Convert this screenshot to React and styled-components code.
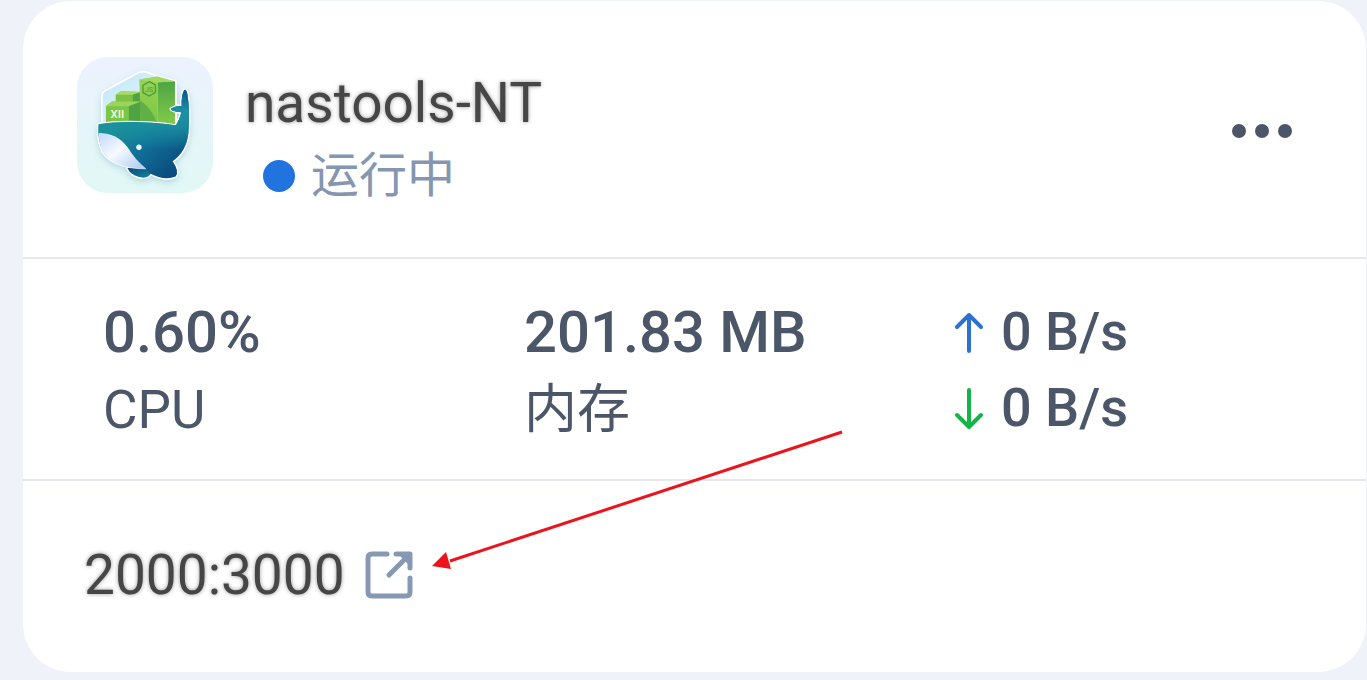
import React from "react";
import styled, { createGlobalStyle } from "styled-components";

const GlobalStyle = createGlobalStyle`
  *, *::before, *::after { box-sizing: border-box; }
  body {
    margin: 0;
    background: #eff3f9;
    font-family: Roboto, "Noto Sans CJK SC", sans-serif;
    color: #4b5668;
  }
`;

const Page = styled.main`
  padding: 1px 1px 8px 23px;
`;

const Card = styled.article`
  position: relative;
  background: #fff;
  border-radius: 48px;
`;

const Header = styled.header`
  display: flex;
  align-items: flex-start;
  height: 256px;
  padding: 56px 64px 0 54px;
`;

const AppLogo = styled.svg`
  flex: none;
  width: 136px;
  height: 136px;
  margin-right: 32px;
`;

const Heading = styled.div`
  flex: 1;
  padding-top: 12px;
`;

const Title = styled.h1`
  margin: 0;
  font-size: 55px;
  line-height: 68px;
  font-weight: 400;
  color: #464646;
  text-shadow: 0 0 4px rgba(0, 0, 0, 0.4);
`;

const Status = styled.p`
  display: flex;
  align-items: center;
  gap: 16px;
  margin: 0;
  padding-left: 18px;
  font-size: 48px;
  line-height: 78px;
  color: #8496b0;
`;

const StatusDot = styled.span`
  width: 32px;
  height: 32px;
  border-radius: 50%;
  background: #2173df;
`;

const MoreButton = styled.button`
  display: flex;
  gap: 9px;
  margin-top: 55px;
  padding: 12px 10px;
  border: 0;
  background: none;
  cursor: pointer;
`;

const MoreDot = styled.span`
  width: 14px;
  height: 14px;
  border-radius: 50%;
  background: #4b5668;
`;

const Stats = styled.section`
  display: grid;
  grid-template-columns: repeat(3, 1fr);
  height: 224px;
  padding: 35px 0 0 80px;
  border-top: 2px solid #e6e8eb;
  border-bottom: 2px solid #e6e8eb;
`;

const Stat = styled.div`
  display: flex;
  flex-direction: column;
`;

const StatValue = styled.strong`
  font-size: 58px;
  line-height: 76px;
  font-weight: 500;
`;

const StatLabel = styled.span`
  font-size: 53px;
  line-height: 80px;
`;

const Rate = styled.div`
  display: flex;
  align-items: center;
  gap: 10px;
  padding-left: 2px;
  font-size: 54px;
  line-height: 76px;
  font-weight: 500;
`;

const RateIcon = styled.svg`
  width: 44px;
  height: 44px;
  fill: none;
  stroke: ${(p) => p.$color};
  stroke-width: 4;
  stroke-linecap: round;
  stroke-linejoin: round;
`;

const Ports = styled.footer`
  display: flex;
  height: 191px;
  padding: 60px 61px 0;
`;

const PortLink = styled.a`
  display: flex;
  align-items: center;
  gap: 20px;
  height: 68px;
  font-size: 55px;
  line-height: 68px;
  color: #464646;
  text-decoration: none;
  text-shadow: 0 0 4px rgba(0, 0, 0, 0.4);
`;

const LinkIcon = styled.svg`
  width: 48px;
  height: 48px;
  fill: none;
  stroke: #8799b2;
  stroke-width: 5;
  stroke-linecap: round;
  stroke-linejoin: round;
`;

const Pointer = styled.svg`
  position: absolute;
  left: 409px;
  top: 428px;
  width: 412px;
  height: 142px;
  pointer-events: none;
`;

const WHALE =
  "M88 222Q180 207 318 225Q330 205 334 186Q304 185 302 176Q318 165 335 168Q333 140 342 121Q348 115 352 133Q360 180 355 248Q350 302 308 332Q329 362 317 377Q283 391 240 367L228 354Q124 346 101 302Q84 268 88 222Z";
const FIN = "M174 352Q181 371 206 378Q236 387 247 362L228 350Z";

function WhaleLogo() {
  return (
    <AppLogo viewBox="24 22 404 404" role="img" aria-label="nastools">
      <defs>
        <linearGradient id="tile" x1="0" y1="0" x2="0" y2="1">
          <stop offset="0" stopColor="#ecf2fe" />
          <stop offset="1" stopColor="#e1f8f5" />
        </linearGradient>
        <linearGradient id="body" gradientUnits="userSpaceOnUse" x1="150" y1="210" x2="300" y2="380">
          <stop offset="0" stopColor="#1b8f96" />
          <stop offset="0.45" stopColor="#11729a" />
          <stop offset="1" stopColor="#0a4a7c" />
        </linearGradient>
        <linearGradient id="tail" gradientUnits="userSpaceOnUse" x1="340" y1="118" x2="330" y2="300">
          <stop offset="0" stopColor="#0b5588" />
          <stop offset="0.35" stopColor="#1c8fa6" />
          <stop offset="0.6" stopColor="#1a93a0" stopOpacity="0.8" />
          <stop offset="1" stopColor="#1a93a0" stopOpacity="0" />
        </linearGradient>
        <linearGradient id="fin" x1="0" y1="0" x2="1" y2="1">
          <stop offset="0" stopColor="#0a467a" />
          <stop offset="1" stopColor="#12889f" />
        </linearGradient>
        <linearGradient id="belly" x1="0" y1="0" x2="1" y2="1">
          <stop offset="0" stopColor="#c3d9f8" />
          <stop offset="0.45" stopColor="#f6faff" />
          <stop offset="1" stopColor="#a9c8ef" />
        </linearGradient>
        <linearGradient id="front" x1="0" y1="0" x2="0" y2="1">
          <stop offset="0" stopColor="#9ad355" />
          <stop offset="1" stopColor="#7dc544" />
        </linearGradient>
        <linearGradient id="side" x1="0" y1="0" x2="0" y2="1">
          <stop offset="0" stopColor="#4da444" />
          <stop offset="1" stopColor="#84cc48" />
        </linearGradient>
        <linearGradient id="hex" x1="0" y1="0" x2="1" y2="1">
          <stop offset="0" stopColor="#bfe6f8" />
          <stop offset="1" stopColor="#effaff" />
        </linearGradient>
        <filter id="glow" x="-20%" y="-20%" width="140%" height="150%">
          <feDropShadow dx="0" dy="8" stdDeviation="10" floodColor="#5b9fba" floodOpacity="0.35" />
        </filter>
      </defs>
      <rect x="24" y="22" width="404" height="404" rx="92" fill="url(#tile)" />
      <g filter="url(#glow)">
        <path fill="url(#hex)" stroke="#fff" strokeWidth="5" strokeLinejoin="round" d="M98 220V136Q98 128 106 123L206 69Q218 63 230 67L262 78 318 94V220Z" />
        <path fill="#fff" stroke="#fff" strokeWidth="8" strokeLinejoin="round" d={WHALE} />
        <path fill="#fff" stroke="#fff" strokeWidth="8" strokeLinejoin="round" d={FIN} />
      </g>
      <path fill="#7cc142" d="M139 134 155 124 214 126V156H139Z" />
      <path fill="#a7da67" d="M139 134 155 124 214 126 190 134Z" />
      <path fill="#4fa343" d="M190 134 214 126V156H190Z" />
      <path fill="#7cc645" d="M110 168 128 154H214V216H110Z" />
      <path fill="#9bd45c" d="M110 168 128 154H214L178 168Z" />
      <path fill="#4fa343" d="M178 168 214 154V218H178Z" />
      <path fill="url(#front)" d="M209 89 264 80V222L213 216Z" />
      <path fill="#5fb045" d="M210 150Q244 170 262 220L213 216Z" />
      <path fill="url(#side)" d="M264 96 315 94V224L264 220Z" />
      <path fill="#a3d862" d="M209 89 264 80 315 94 264 98Z" />
      <path fill="none" stroke="#4a9d3d" strokeWidth="4" strokeLinejoin="round" d="M220 106 239 95 257 105V127L239 138 220 128Z" />
      <text x="238" y="125" textAnchor="middle" fontFamily="Roboto" fontSize="22" fill="#4a9d3d">JS</text>
      <text x="144" y="202" textAnchor="middle" fontFamily="Roboto" fontSize="34" fontWeight="500" fill="#f3fbe9">XII</text>
      <path fill="none" stroke="#fff" strokeWidth="7" strokeLinejoin="round" d={WHALE} />
      <path fill="url(#fin)" d={FIN} />
      <path fill="url(#body)" d={WHALE} />
      <path fill="url(#tail)" d={WHALE} />
      <path fill="url(#belly)" stroke="#eef7ff" strokeWidth="2" d="M90 249Q144 249 174 291Q195 327 228 354Q132 355 101 302Q90 278 90 249Z" />
      <circle cx="208" cy="290" r="8" fill="#eafcff" />
    </AppLogo>
  );
}

export default function App() {
  return (
    <>
      <GlobalStyle />
      <Page>
        <Card>
          <Header>
            <WhaleLogo />
            <Heading>
              <Title>nastools-NT</Title>
              <Status>
                <StatusDot />
                运行中
              </Status>
            </Heading>
            <MoreButton type="button" aria-label="更多">
              <MoreDot />
              <MoreDot />
              <MoreDot />
            </MoreButton>
          </Header>
          <Stats>
            <Stat>
              <StatValue>0.60%</StatValue>
              <StatLabel>CPU</StatLabel>
            </Stat>
            <Stat>
              <StatValue>201.83 MB</StatValue>
              <StatLabel>内存</StatLabel>
            </Stat>
            <Stat>
              <Rate>
                <RateIcon viewBox="0 0 44 44" $color="#2b72d0" aria-hidden="true">
                  <path d="M22 41V5M10 17 22 5 34 17" />
                </RateIcon>
                0 B/s
              </Rate>
              <Rate>
                <RateIcon viewBox="0 0 44 44" $color="#12b548" aria-hidden="true">
                  <path d="M22 4V41M10 29 22 41 34 29" />
                </RateIcon>
                0 B/s
              </Rate>
            </Stat>
          </Stats>
          <Ports>
            <PortLink href="#port-2000">
              2000:3000
              <LinkIcon viewBox="0 0 48 48" aria-hidden="true">
                <path d="M22 3H7Q3 3 3 7V41Q3 45 7 45H41Q45 45 45 41V27M31 3H45V17M43 5 24 24" />
                <path fill="#8799b2" stroke="none" d="M34 4H44V14Z" />
              </LinkIcon>
            </PortLink>
          </Ports>
          <Pointer viewBox="0 0 412 142" aria-hidden="true">
            <path d="M410 3 18 132" fill="none" stroke="#ec141c" strokeWidth="3" />
            <path d="M0 137 14 123 19 140Z" fill="#ec141c" />
          </Pointer>
        </Card>
      </Page>
    </>
  );
}
